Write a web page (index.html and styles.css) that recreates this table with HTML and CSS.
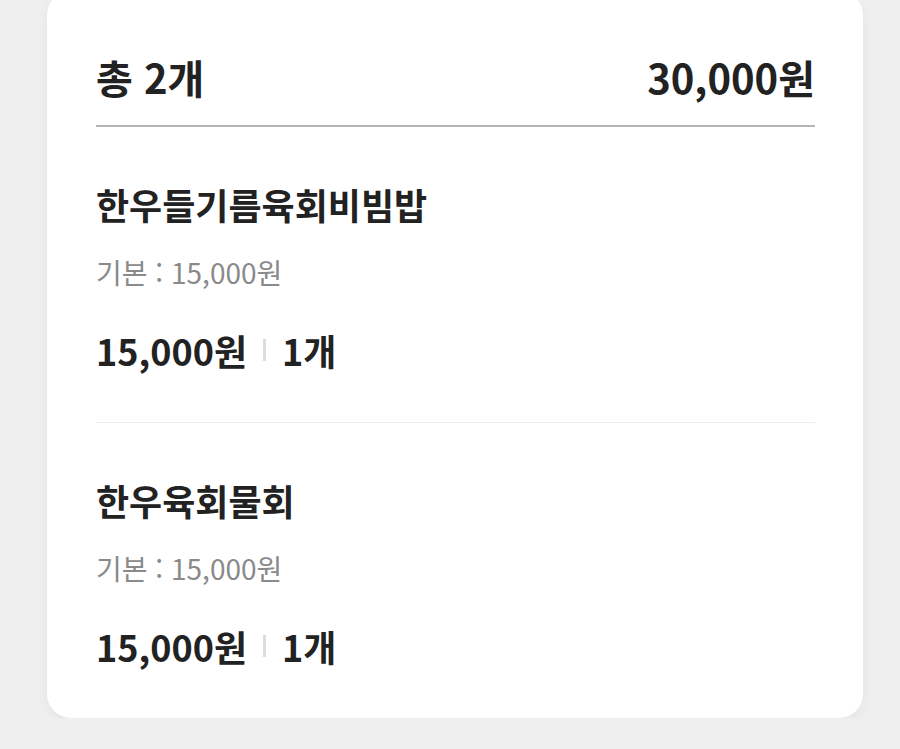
FILE: index.html
```html
<!DOCTYPE html>
<html lang="ko">
<head>
    <meta charset="UTF-8">
    <meta name="viewport" content="width=device-width, initial-scale=1.0">
    <title>주문 내역</title>
    <link rel="stylesheet" href="styles.css">
</head>
<body>
    <div class="order-card">
        <div class="order-total">
            <span class="total-count">총 2개</span>
            <span class="total-price">30,000원</span>
        </div>
        <div class="order-item">
            <div class="item-name">한우들기름육회비빔밥</div>
            <div class="item-option">기본 : 15,000원</div>
            <div class="item-summary">
                <span>15,000원</span>
                <span class="bar"></span>
                <span>1개</span>
            </div>
        </div>
        <div class="order-item">
            <div class="item-name">한우육회물회</div>
            <div class="item-option">기본 : 15,000원</div>
            <div class="item-summary">
                <span>15,000원</span>
                <span class="bar"></span>
                <span>1개</span>
            </div>
        </div>
    </div>
</body>
</html>
```

FILE: styles.css
```css
body {
    margin: 0;
    background-color: #efefef;
    font-family: 'Noto Sans CJK KR', 'Noto Sans', sans-serif;
    color: #222;
}
.order-card {
    width: 816px;
    margin: -9px 0 0 47px;
    padding: 0 48px 0 49px;
    box-sizing: border-box;
    background-color: #fff;
    border-radius: 24px;
    box-shadow: 0 4px 12px rgba(0,0,0,0.05);
}
.order-total {
    display: flex;
    justify-content: space-between;
    align-items: center;
    padding: 61px 0 23px;
    border-bottom: 2px solid #b4b4b4;
    font-size: 40px;
    font-weight: 700;
    line-height: 50px;
}
.order-item {
    padding: 53px 0 48px;
    border-bottom: 1px solid #ececec;
}
.order-item:last-child {
    border-bottom: none;
}
.item-name {
    font-size: 36px;
    font-weight: 700;
    line-height: 48px;
}
.item-option {
    margin-top: 26px;
    font-size: 28px;
    line-height: 36px;
    color: #8a8a8a;
}
.item-summary {
    display: flex;
    align-items: center;
    margin-top: 36px;
    font-size: 36px;
    font-weight: 700;
    line-height: 48px;
}
.bar {
    width: 3px;
    height: 22px;
    margin: 0 16px;
    background-color: #ddd;
}
```
